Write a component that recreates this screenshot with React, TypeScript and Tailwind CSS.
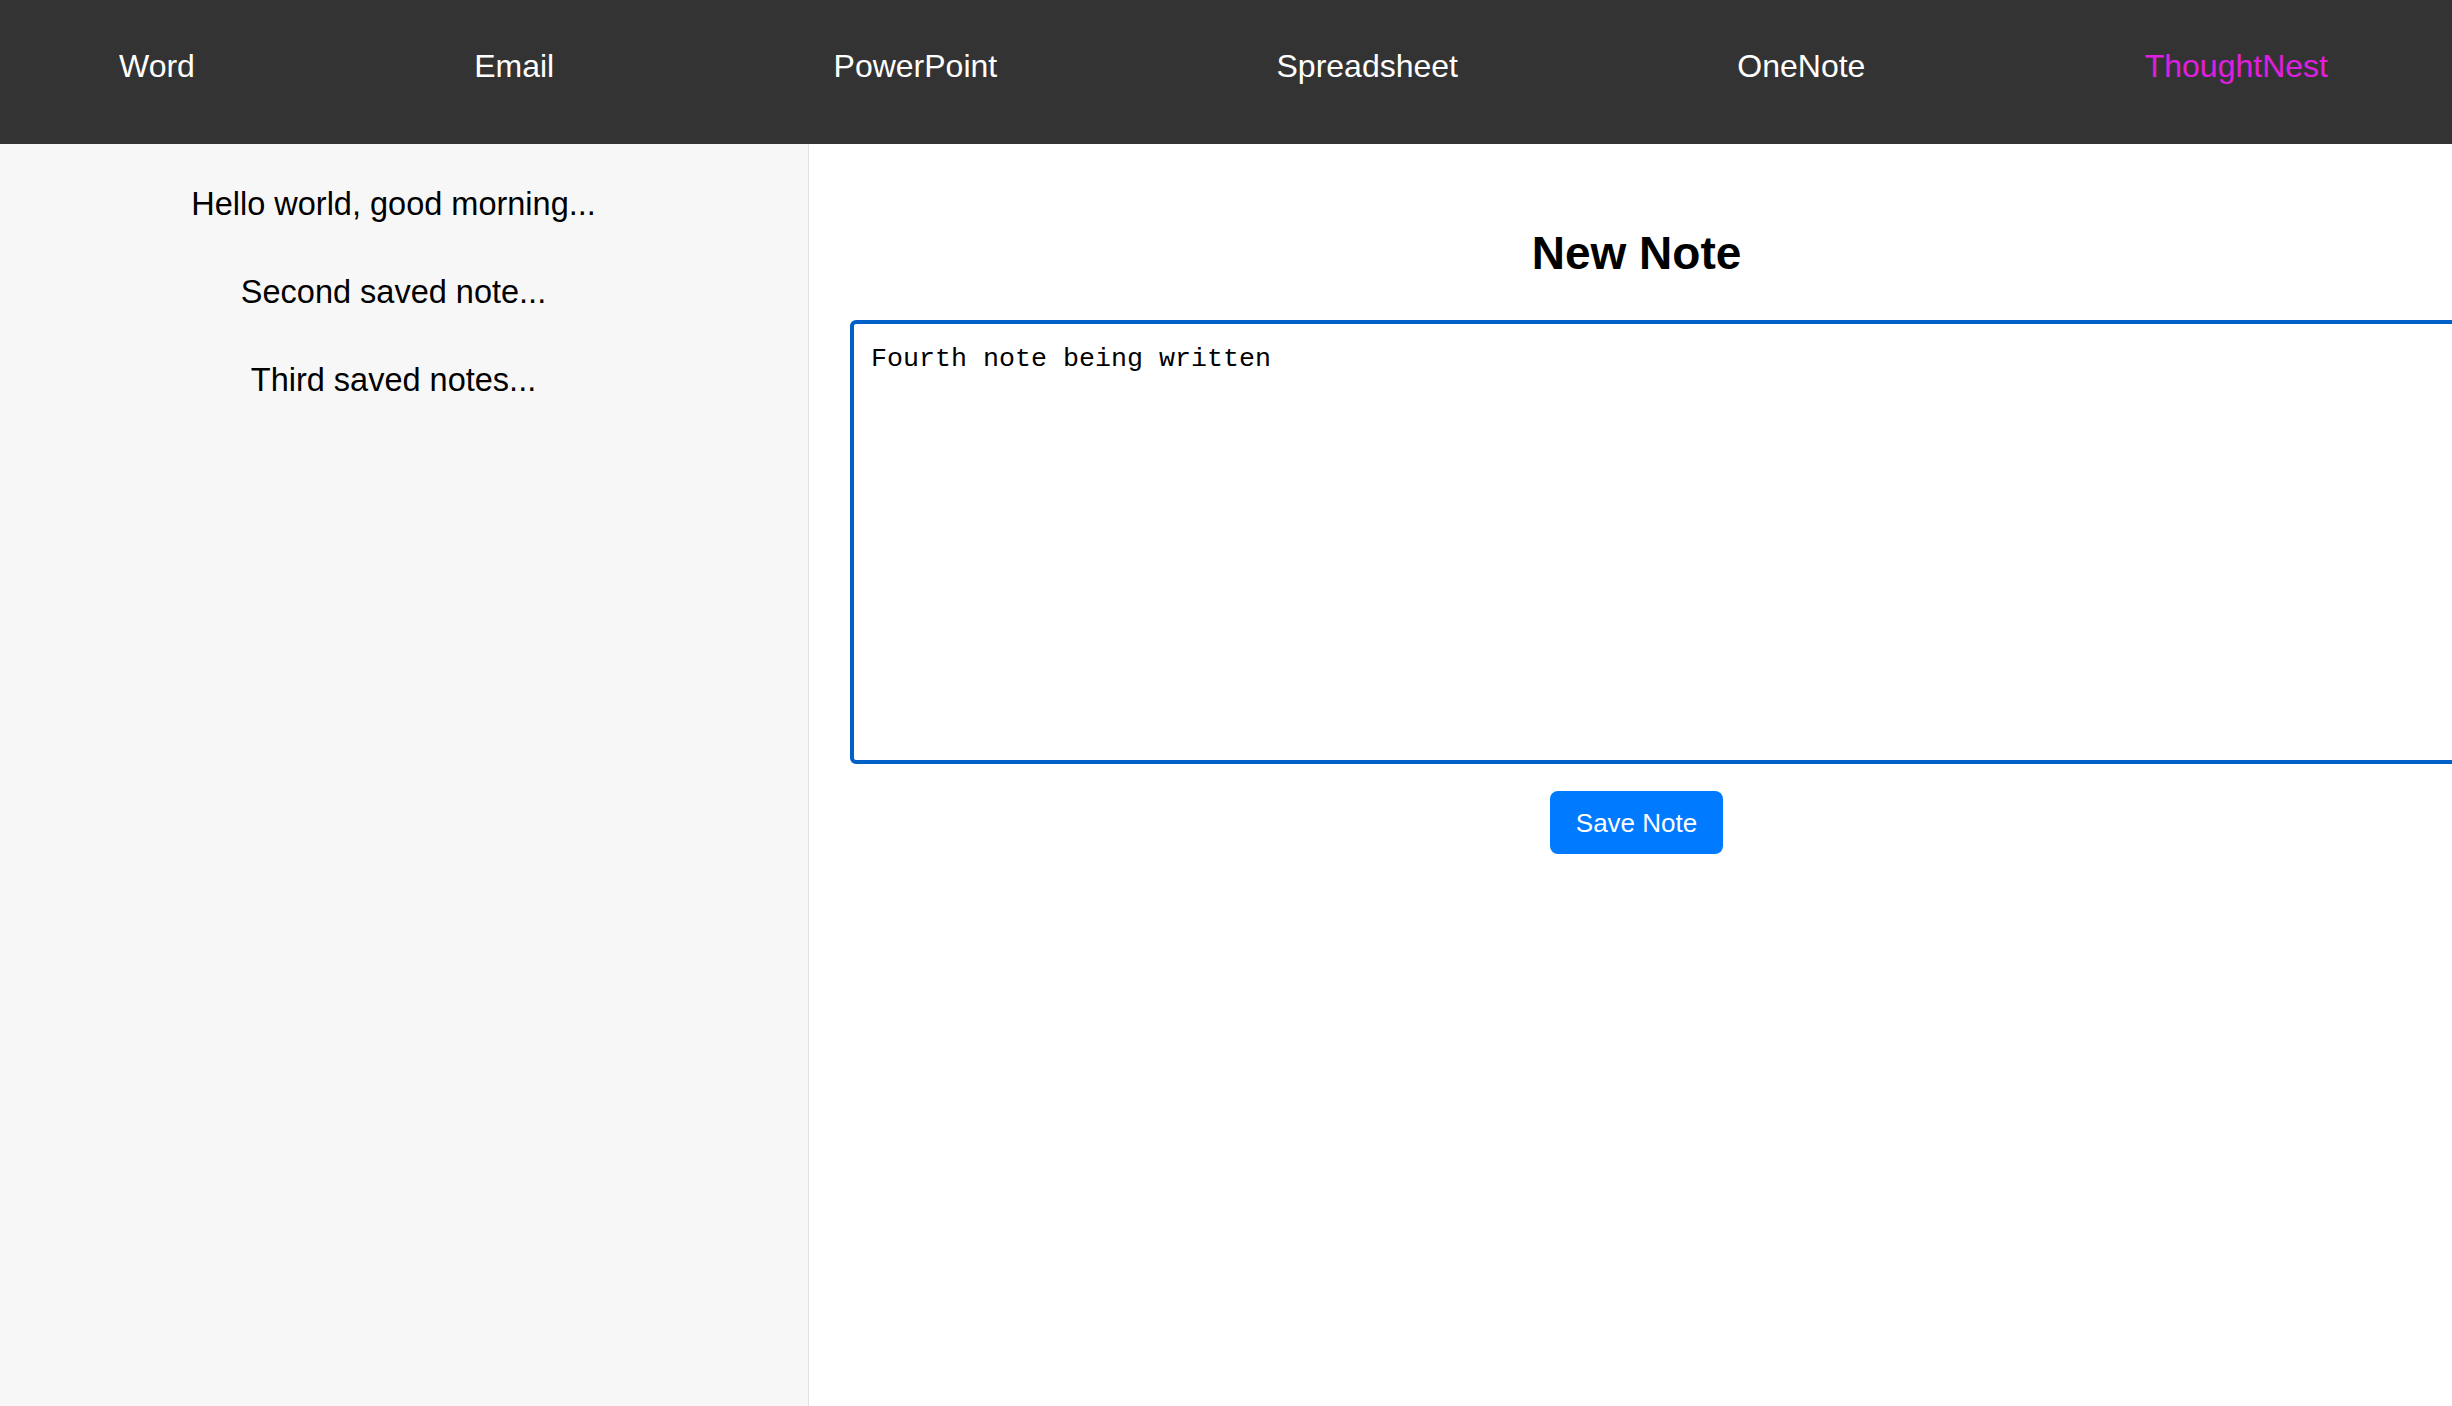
import { useEffect, useRef } from 'react';

const apps = ['Word', 'Email', 'PowerPoint', 'Spreadsheet', 'OneNote', 'ThoughtNest'];
const savedNotes = ['Hello world, good morning...', 'Second saved note...', 'Third saved notes...'];

function NavBar() {
  return (
    <nav className="h-[144px] shrink-0 bg-[#333333] flex items-center justify-between pl-[119px] pr-[124px] pb-[13px]">
      {apps.map((app) => (
        <a
          key={app}
          href="#"
          className={`text-[32px] leading-[36px] ${app === 'ThoughtNest' ? 'text-[#e01ee0]' : 'text-white'}`}
        >
          {app}
        </a>
      ))}
    </nav>
  );
}

function Sidebar() {
  return (
    <aside className="w-[809px] shrink-0 bg-[#f7f7f7] border-r border-[#e2e2e2] pt-[42px] pr-[21px] flex flex-col items-center gap-[52px]">
      {savedNotes.map((note) => (
        <div key={note} className="text-[32.5px] leading-[36px] text-black cursor-pointer">
          {note}
        </div>
      ))}
    </aside>
  );
}

function Editor() {
  const ref = useRef<HTMLTextAreaElement>(null);

  useEffect(() => {
    const el = ref.current;
    if (!el) return;
    el.focus();
    const len = el.value.length;
    el.setSelectionRange(len, len);
  }, []);

  return (
    <main className="flex-1 min-w-0 overflow-hidden bg-white pt-[86px] pl-[41px] pr-[29px] flex flex-col items-center">
      <h2 className="text-[46px] leading-[46px] font-bold text-black">New Note</h2>
      <textarea
        ref={ref}
        defaultValue="Fourth note being written"
        className="self-start shrink-0 mt-[44px] w-[1660px] h-[444px] border-4 border-[#0060c8] rounded-[6px] pt-[15px] px-[17px] outline-none resize-none text-black caret-black text-[26.67px] [font-family:'Liberation_Mono',monospace]"
      />
      <button className="mt-[27px] h-[63px] px-[26px] rounded-[8px] bg-[#007bff] text-white text-[26px] leading-none">
        Save Note
      </button>
    </main>
  );
}

export default function App() {
  return (
    <div className="h-screen w-full overflow-hidden flex flex-col [font-family:'Liberation_Sans',Arial,sans-serif]">
      <NavBar />
      <div className="flex-1 flex min-h-0">
        <Sidebar />
        <Editor />
      </div>
    </div>
  );
}
